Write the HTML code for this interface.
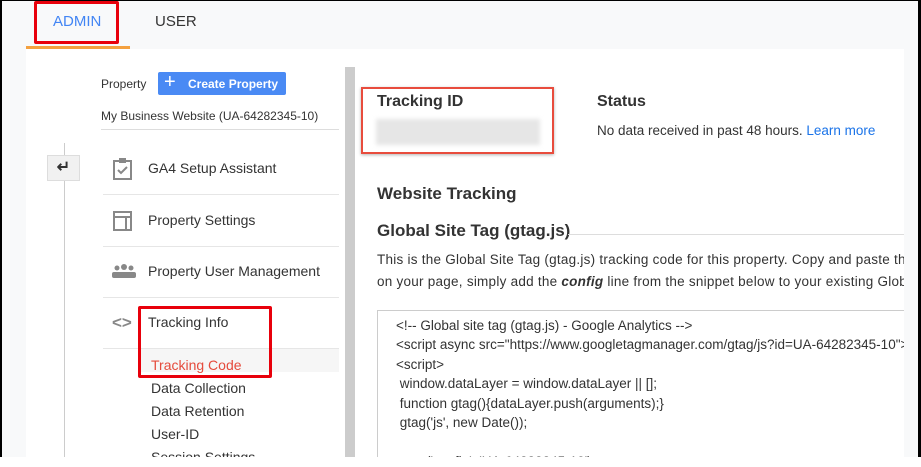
<!DOCTYPE html>
<html><head><style>
body{margin:0;width:921px;height:467px;position:relative;overflow:hidden;background:#fff;font-family:"Liberation Sans",Arial,sans-serif;color:#333}
.a{position:absolute}
.t{font-size:14px;color:#333}
.rb{position:absolute;border:3px solid #e8000b;border-radius:2px}
.sep{position:absolute;left:103px;width:236px;height:1px;background:#e6e6e6}
.sub{position:absolute;left:151px;font-size:14px;color:#333}
.code div{height:19.4px;white-space:nowrap}
</style></head><body>
<div class="a" style="left:0;top:0;width:921px;height:457px;background:#000"></div>
<div class="a" style="left:2px;top:1px;width:916px;height:456px;background:#f8f9fa"></div>
<div class="a" style="left:26px;top:49px;width:878px;height:408px;background:#fff"></div>
<div class="a" style="left:26px;top:46px;width:104px;height:3px;background:#f4a13f"></div>
<div class="a" style="left:53px;top:13px;font-size:15px;color:#4285f4">ADMIN</div>
<div class="a" style="left:155px;top:13px;font-size:15px;color:#333">USER</div>
<div class="rb" style="left:34px;top:1px;width:79px;height:37px"></div>

<div class="a" style="left:101px;top:77px;font-size:12px">Property</div>
<div class="a" style="left:158px;top:72px;width:128px;height:23px;background:#4a8af4;border-radius:2px;color:#fff;font-size:12px;font-weight:bold"><span style="position:absolute;left:6px;top:-1px;font-size:20px;font-weight:normal">+</span><span style="position:absolute;left:30px;top:5px">Create Property</span></div>
<div class="a" style="left:101px;top:109px;font-size:12px">My Business Website (UA-64282345-10)</div>
<div class="a" style="left:101px;top:129px;width:238px;height:1px;background:#ddd"></div>

<div class="a" style="left:64px;top:143px;width:1px;height:314px;background:#ccc"></div>
<div class="a" style="left:47px;top:155px;width:33px;height:26px;background:#f1f1f1;border:1px solid #ddd;box-sizing:border-box;text-align:center;font-size:16px;font-weight:bold;line-height:24px">&#8629;</div>

<svg class="a" style="left:112px;top:157px" width="22" height="24"><rect x="2" y="4" width="17" height="18" fill="none" stroke="#888" stroke-width="2"/><rect x="7" y="1" width="7" height="5" fill="#888"/><path d="M6 13l3 3 6-6" fill="none" stroke="#888" stroke-width="2"/></svg>
<div class="a t" style="left:148px;top:160px">GA4 Setup Assistant</div>
<div class="sep" style="top:194px"></div>
<svg class="a" style="left:112px;top:210px" width="22" height="22"><rect x="2" y="2" width="17" height="18" fill="none" stroke="#888" stroke-width="2"/><path d="M2 7h17M14 7v13" stroke="#888" stroke-width="2"/></svg>
<div class="a t" style="left:148px;top:212px">Property Settings</div>
<div class="sep" style="top:246px"></div>
<svg class="a" style="left:111px;top:263px" width="26" height="16"><circle cx="6" cy="5" r="2.5" fill="#888"/><circle cx="13" cy="4" r="3" fill="#888"/><circle cx="20" cy="5" r="2.5" fill="#888"/><rect x="1" y="9" width="24" height="6" rx="2" fill="#888"/></svg>
<div class="a t" style="left:148px;top:263px">Property User Management</div>
<div class="sep" style="top:297px"></div>
<div class="a" style="left:112px;top:313px;font-size:17px;color:#888;font-weight:bold">&lt;&gt;</div>
<div class="a t" style="left:148px;top:314px">Tracking Info</div>
<div class="sep" style="top:348px"></div>
<div class="a" style="left:140px;top:349px;width:199px;height:23px;background:#f6f6f6"></div>
<div class="sub" style="top:357px;color:#e54b3c">Tracking Code</div>
<div class="sub" style="top:380px">Data Collection</div>
<div class="sub" style="top:403px">Data Retention</div>
<div class="sub" style="top:426px">User-ID</div>
<div class="sub" style="top:449px;height:8px;overflow:hidden">Session Settings</div>
<div class="rb" style="left:138px;top:306px;width:128px;height:66px"></div>

<div class="a" style="left:345px;top:67px;width:10px;height:390px;background:#ccc"></div>

<div class="a" style="left:377px;top:93px;font-size:16px;font-weight:bold">Tracking ID</div>
<div class="a" style="left:376px;top:119px;width:164px;height:26px;background:#e6e6e6;filter:blur(2px)"></div>
<div class="a" style="left:361px;top:87px;width:189px;height:63px;border:2px solid #e84c3d;box-shadow:0 1px 3px rgba(0,0,0,.3)"></div>
<div class="a" style="left:597px;top:93px;font-size:16px;font-weight:bold">Status</div>
<div class="a" style="left:597px;top:123px;font-size:13.5px">No data received in past 48 hours. <span style="color:#1a73e8">Learn more</span></div>
<div class="a" style="left:377px;top:184px;font-size:17px;font-weight:bold">Website Tracking</div>
<div class="a" style="left:377px;top:221px;font-size:17px;font-weight:bold">Global Site Tag (gtag.js)</div>
<div class="a" style="left:568px;top:234px;width:336px;height:1px;background:#ddd"></div>
<div class="a" style="left:377px;top:249px;font-size:13.5px;letter-spacing:0.25px;white-space:nowrap;width:527px;overflow:hidden;line-height:22px">This is the Global Site Tag (gtag.js) tracking code for this property. Copy and paste this code<br>on your page, simply add the <b><i>config</i></b> line from the snippet below to your existing Global Site Tag.</div>
<div class="a code" style="left:377px;top:310px;width:527px;height:147px;border:1px solid #ccc;border-right:none;border-bottom:none;overflow:hidden;font-size:13.5px;box-sizing:border-box;padding:7px 0 0 18px">
<div>&lt;!-- Global site tag (gtag.js) - Google Analytics --&gt;</div>
<div>&lt;script async src="https://www.googletagmanager.com/gtag/js?id=UA-64282345-10"&gt;&lt;/script&gt;</div>
<div>&lt;script&gt;</div>
<div>&nbsp;window.dataLayer = window.dataLayer || [];</div>
<div>&nbsp;function gtag(){dataLayer.push(arguments);}</div>
<div>&nbsp;gtag('js', new Date());</div>
<div>&nbsp;</div>
<div>&nbsp;gtag('config', 'UA-64282345-10');</div>
</div>
</body></html>
